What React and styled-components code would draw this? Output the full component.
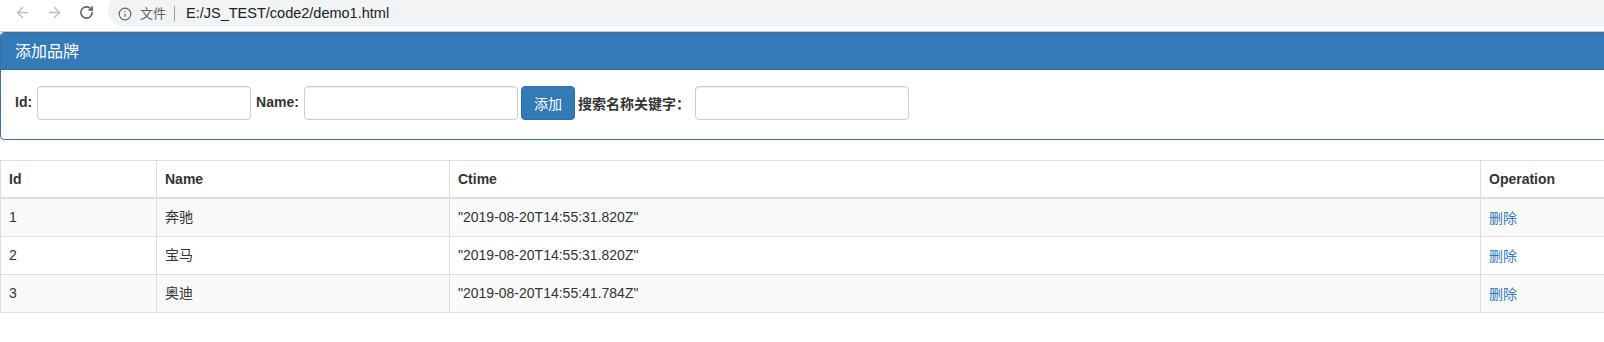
import React from "react";
import styled, { createGlobalStyle } from "styled-components";
import { ArrowLeft, ArrowRight, RotateCw, Info } from "lucide-react";

const GlobalStyle = createGlobalStyle`
  html, body {
    margin: 0;
    padding: 0;
    background: #fff;
    overflow: hidden;
  }
  body {
    font-family: "Liberation Sans", Arial, "Noto Sans CJK SC", sans-serif;
    font-size: 14px;
    line-height: 1.42857;
    color: #333;
  }
  * {
    box-sizing: border-box;
  }
`;

const brands = [
  { id: 1, name: "奔驰", ctime: "2019-08-20T14:55:31.820Z" },
  { id: 2, name: "宝马", ctime: "2019-08-20T14:55:31.820Z" },
  { id: 3, name: "奥迪", ctime: "2019-08-20T14:55:41.784Z" },
];

export default function App() {
  return (
    <>
      <GlobalStyle />
      <Toolbar>
        <NavButton $disabled>
          <ArrowLeft size={17} strokeWidth={2} />
        </NavButton>
        <NavButton $disabled>
          <ArrowRight size={17} strokeWidth={2} />
        </NavButton>
        <NavButton>
          <RotateCw size={15} strokeWidth={2.6} />
        </NavButton>
        <Omnibox>
          <Info size={14} strokeWidth={2} color="#5f6368" />
          <Scheme>文件</Scheme>
          <Divider />
          <Url>E:/JS_TEST/code2/demo1.html</Url>
        </Omnibox>
      </Toolbar>

      <Page>
        <Panel>
          <PanelHeading>添加品牌</PanelHeading>
          <PanelBody>
            <Label>Id:</Label>
            <Input type="text" />
            <Label>Name:</Label>
            <Input type="text" />
            <Button>添加</Button>
            <Label $cjk>搜索名称关键字：</Label>
            <Input type="text" />
          </PanelBody>
        </Panel>

        <Table>
          <colgroup>
            <Col $w={156} />
            <Col $w={293} />
            <Col $w={1031} />
            <Col />
          </colgroup>
          <thead>
            <tr>
              <Th>Id</Th>
              <Th>Name</Th>
              <Th>Ctime</Th>
              <Th>Operation</Th>
            </tr>
          </thead>
          <tbody>
            {brands.map((b, i) => (
              <Row key={b.id} $striped={i % 2 === 0}>
                <Td>{b.id}</Td>
                <Td>{b.name}</Td>
                <Td>"{b.ctime}"</Td>
                <Td>
                  <Link href="#">删除</Link>
                </Td>
              </Row>
            ))}
          </tbody>
        </Table>
      </Page>
    </>
  );
}

const Toolbar = styled.div`
  display: flex;
  align-items: flex-start;
  height: 32px;
  padding-left: 11px;
  background: #fff;
  border-bottom: 1px solid #c9c9c9;
  overflow: hidden;
`;

const NavButton = styled.div`
  display: flex;
  align-items: center;
  justify-content: center;
  width: 23px;
  height: 25px;
  margin-right: 9px;
  color: ${(p) => (p.$disabled ? "#b9bcc0" : "#5f6368")};
`;

const Omnibox = styled.div`
  flex: 1;
  display: flex;
  align-items: center;
  height: 34px;
  margin-top: -7px;
  margin-left: 1px;
  padding: 7px 0 0 10px;
  background: #f1f3f4;
  border-radius: 17px 0 0 17px;
`;

const Scheme = styled.span`
  margin-left: 8px;
  font-family: "Noto Sans CJK SC", sans-serif;
  font-size: 13px;
  color: #5f6368;
`;

const Divider = styled.span`
  width: 1px;
  height: 15px;
  margin: 0 11px 0 8px;
  background: #9aa0a6;
`;

const Url = styled.span`
  font-family: "Liberation Sans", Arial, sans-serif;
  font-size: 14.5px;
  color: #202124;
`;

const Page = styled.div`
  width: 1640px;
`;

const Panel = styled.div`
  margin-bottom: 20px;
  border: 1px solid #3f6e9c;
  border-radius: 4px;
  background: #fff;
`;

const PanelHeading = styled.div`
  padding: 9px 14px 10px;
  background: #337ab7;
  border-bottom: 1px solid #2e6da4;
  border-radius: 3px 3px 0 0;
  color: #fff;
  font-family: "Noto Sans CJK SC", sans-serif;
  font-size: 16px;
  line-height: 17px;
`;

const PanelBody = styled.div`
  display: flex;
  align-items: center;
  gap: 5px;
  padding: 16px 14px 19px;
`;

const Label = styled.label`
  font-weight: bold;
  font-family: ${(p) =>
    p.$cjk ? `"Noto Sans CJK SC", sans-serif` : `"Liberation Sans", Arial, sans-serif`};
  margin-left: ${(p) => (p.$cjk ? "-2px" : "0")};
`;

const Input = styled.input`
  width: 214px;
  height: 34px;
  padding: 6px 12px;
  border: 1px solid #ccc;
  border-radius: 4px;
  box-shadow: inset 0 1px 1px rgba(0, 0, 0, 0.075);
  font-size: 14px;
`;

const Button = styled.button`
  height: 34px;
  margin-left: -2px;
  padding: 6px 12px;
  background: #337ab7;
  border: 1px solid #2e6da4;
  border-radius: 4px;
  color: #fff;
  font-family: "Noto Sans CJK SC", sans-serif;
  font-size: 14px;
  line-height: 20px;
`;

const Table = styled.table`
  width: 100%;
  table-layout: fixed;
  border-collapse: collapse;
  border-spacing: 0;
  border: 1px solid #ddd;
`;

const Col = styled.col`
  width: ${(p) => (p.$w ? `${p.$w}px` : "auto")};
`;

const Th = styled.th`
  padding: 8px;
  text-align: left;
  vertical-align: bottom;
  line-height: 20px;
  border: 1px solid #ddd;
  border-bottom-width: 2px;
  font-weight: bold;
`;

const Row = styled.tr`
  background: ${(p) => (p.$striped ? "#f9f9f9" : "#fff")};
`;

const Td = styled.td`
  padding: 8px;
  line-height: 20px;
  vertical-align: top;
  border: 1px solid #ddd;
  font-family: "Liberation Sans", Arial, "Noto Sans CJK SC", sans-serif;
`;

const Link = styled.a`
  color: #337ab7;
  text-decoration: none;
  font-family: "Noto Sans CJK SC", sans-serif;
`;
